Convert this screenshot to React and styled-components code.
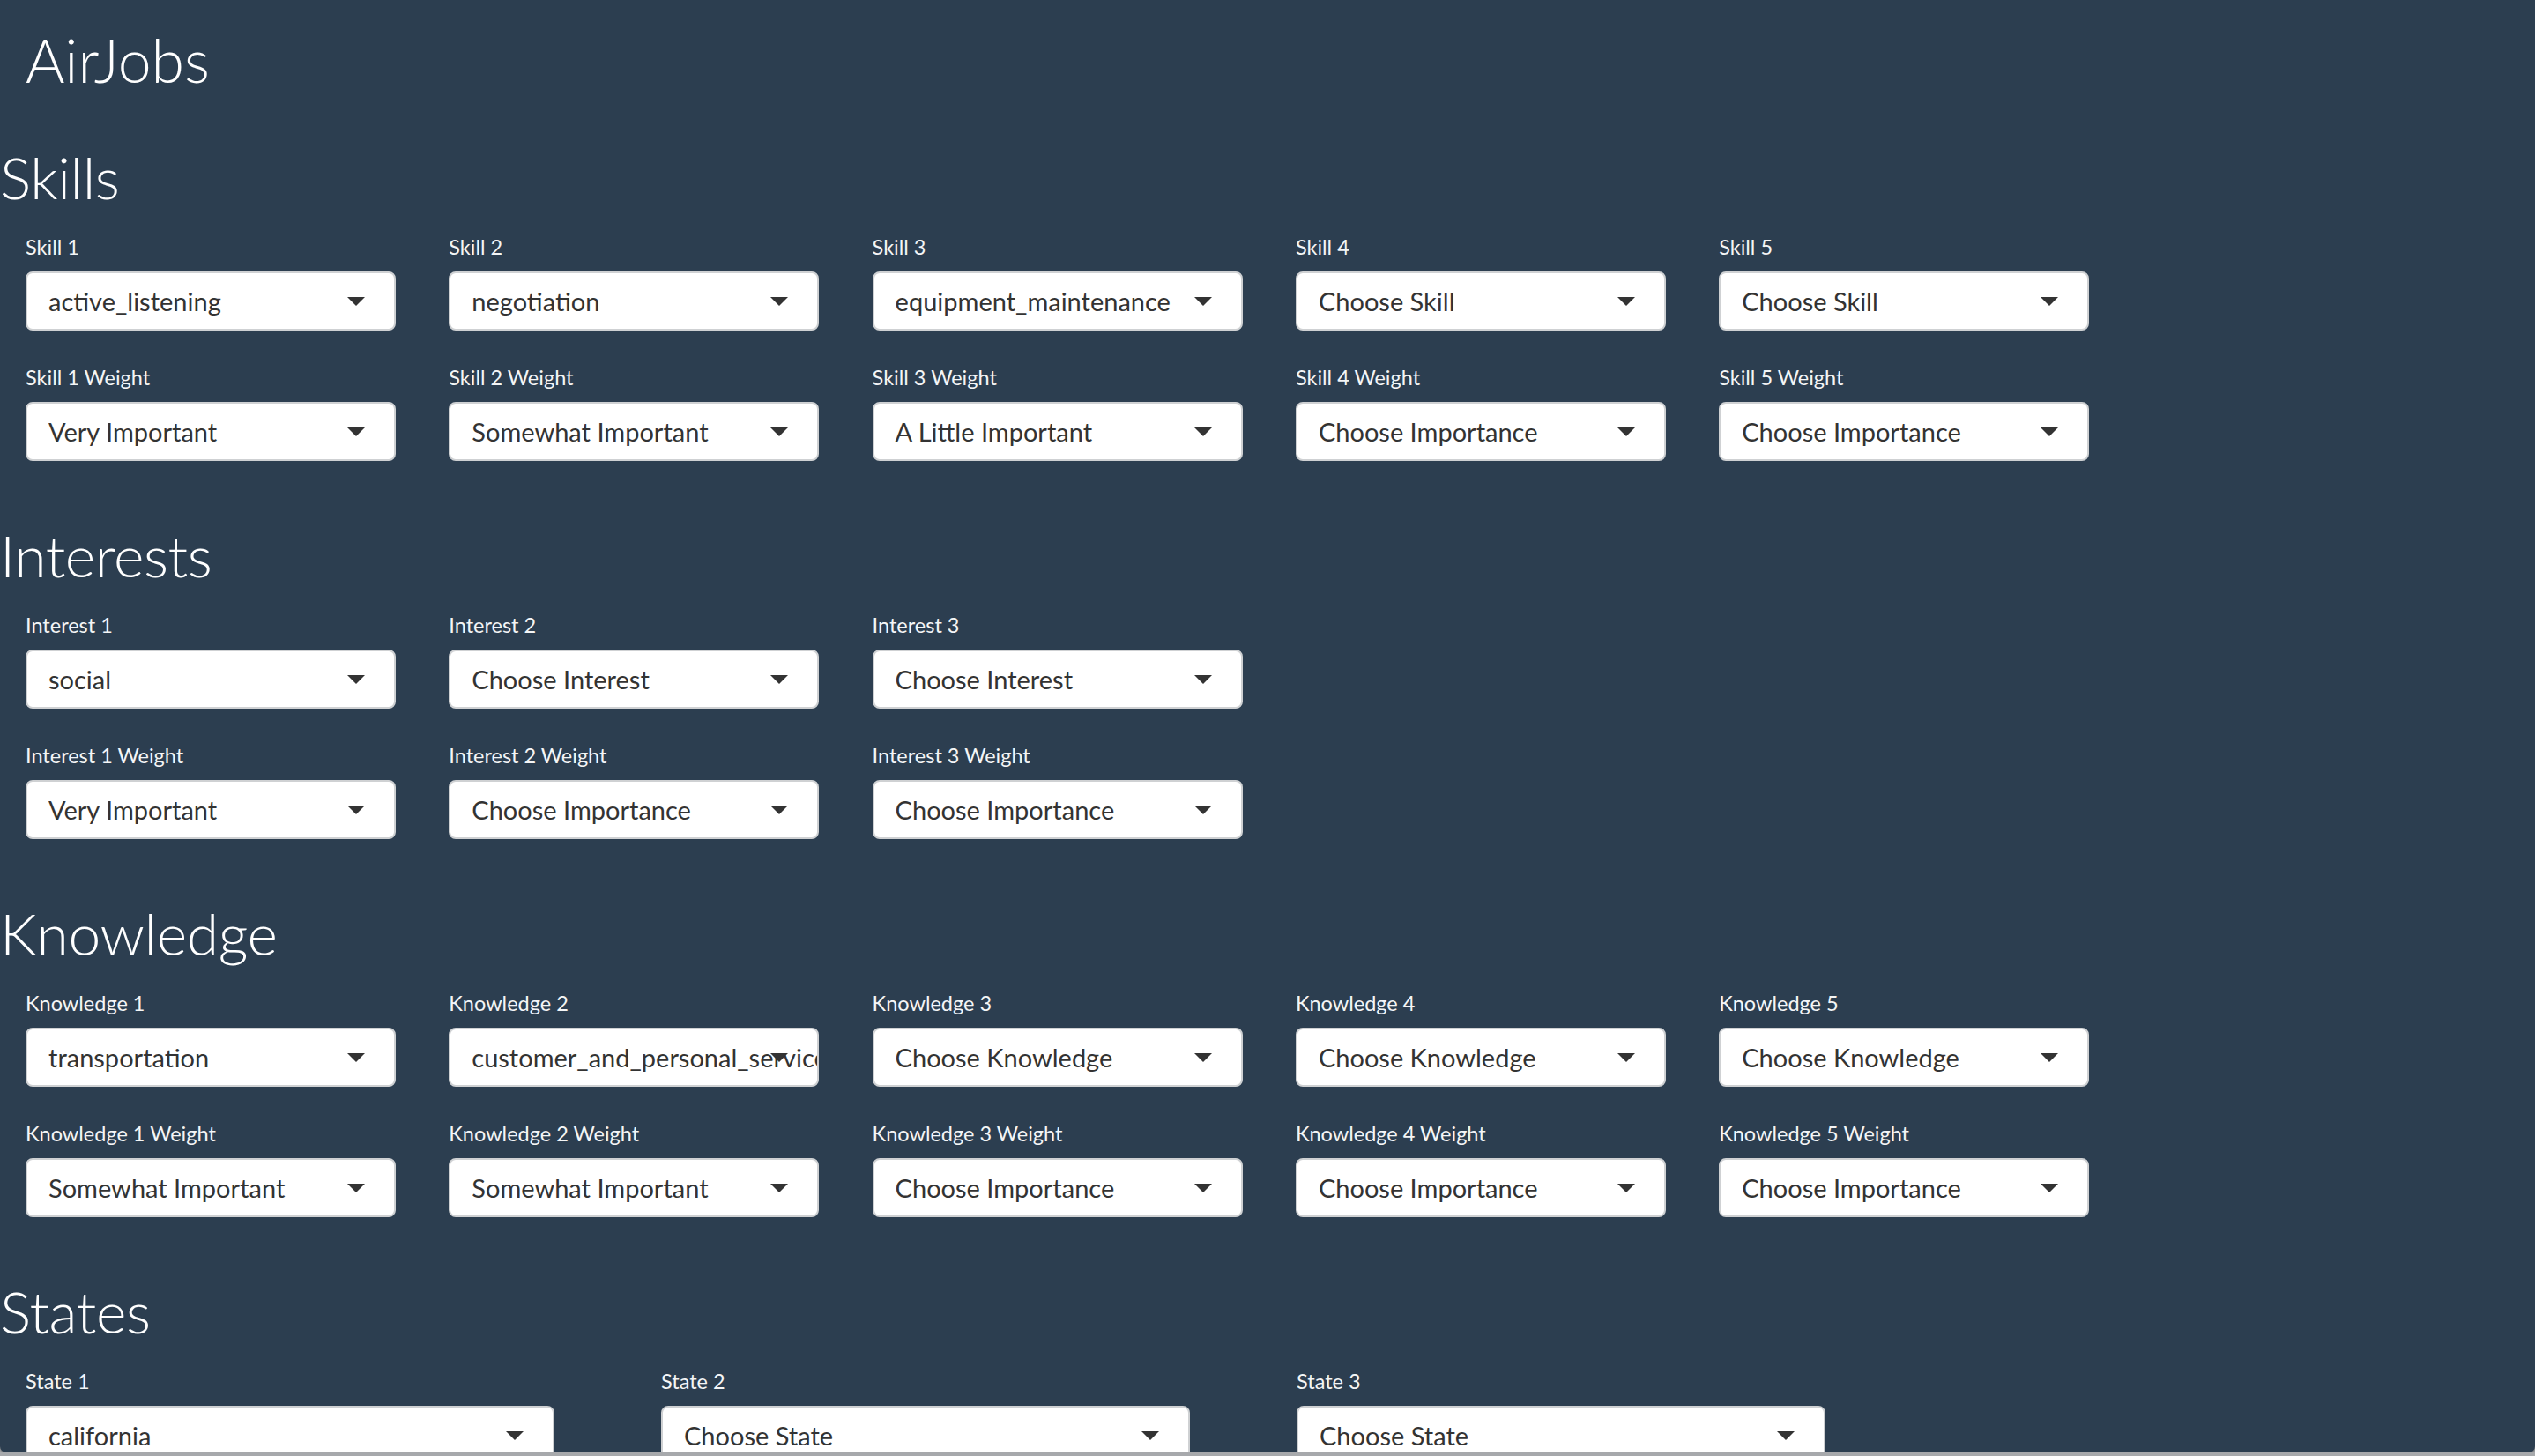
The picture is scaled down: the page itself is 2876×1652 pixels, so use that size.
import React from "react";
import styled, { createGlobalStyle } from "styled-components";

const GlobalStyle = createGlobalStyle`
  html, body {
    margin: 0;
    padding: 0;
    background: #a7a9ac;
  }
  body {
    font-family: "Lato", "Open Sans", sans-serif;
  }
`;

const Page = styled.div`
  background: #2c3e50;
  color: #ffffff;
  height: 1648px;
  overflow: hidden;
  border-radius: 0 0 7px 7px;
  box-shadow: 0 2px 2px rgba(0, 0, 0, 0.25);
`;

const Brand = styled.h1`
  margin: 0;
  padding: 26px 0 0 29px;
  font-size: 68px;
  line-height: 84px;
  font-weight: 300;
  color: #ffffff;
`;

const SectionList = styled.div`
  display: flex;
  flex-direction: column;
  gap: 67px;
  margin-top: 51px;
`;

const Section = styled.section`
  display: flex;
  flex-direction: column;
`;

const Heading = styled.h2`
  margin: 0 0 26px 0;
  font-size: 66px;
  line-height: 80px;
  font-weight: 300;
  letter-spacing: -0.4px;
  color: #ffffff;
`;

const Grid = styled.div`
  display: grid;
  grid-template-columns: repeat(${(p) => p.cols}, ${(p) => p.colWidth}px);
  column-gap: ${(p) => p.gap}px;
  row-gap: 40px;
  padding-left: 29px;
`;

const Field = styled.div`
  display: flex;
  flex-direction: column;
`;

const Label = styled.label`
  font-size: 23.5px;
  line-height: 26px;
  margin-bottom: 15px;
  color: #f4f5f6;
  white-space: nowrap;
`;

const SelectBox = styled.div`
  position: relative;
  box-sizing: border-box;
  height: 67px;
  display: flex;
  align-items: center;
  padding-left: 24px;
  background: #ffffff;
  border: 2px solid #cfd1d3;
  border-radius: 8px;
  overflow: hidden;
  font-size: 29px;
  line-height: 36px;
  color: #333333;
  white-space: nowrap;
`;

const Caret = styled.span`
  position: absolute;
  right: 33px;
  top: 50%;
  margin-top: -5px;
  width: 0;
  height: 0;
  border-left: 10px solid transparent;
  border-right: 10px solid transparent;
  border-top: 10px solid #333333;
`;

const Select = ({ value }) => (
  <SelectBox>
    <span>{value}</span>
    <Caret />
  </SelectBox>
);

const FieldGroup = ({ label, value }) => (
  <Field>
    <Label>{label}</Label>
    <Select value={value} />
  </Field>
);

const sections = [
  {
    title: "Skills",
    name: "Skill",
    cols: 5,
    choose: "Choose Skill",
    values: ["active_listening", "negotiation", "equipment_maintenance", null, null],
    weights: ["Very Important", "Somewhat Important", "A Little Important", null, null],
  },
  {
    title: "Interests",
    name: "Interest",
    cols: 5,
    choose: "Choose Interest",
    values: ["social", null, null],
    weights: ["Very Important", null, null],
  },
  {
    title: "Knowledge",
    name: "Knowledge",
    cols: 5,
    choose: "Choose Knowledge",
    values: ["transportation", "customer_and_personal_service", null, null, null],
    weights: ["Somewhat Important", "Somewhat Important", null, null, null],
  },
];

const states = ["california", null, null];

const App = () => {
  return (
    <>
      <GlobalStyle />
      <Page>
        <Brand>AirJobs</Brand>
        <SectionList>
          {sections.map((s) => (
            <Section key={s.title}>
              <Heading>{s.title}</Heading>
              <Grid cols={s.cols} colWidth={420} gap={60.3}>
                {s.values.map((v, i) => (
                  <FieldGroup
                    key={"v" + i}
                    label={`${s.name} ${i + 1}`}
                    value={v || s.choose}
                  />
                ))}
                {s.values.length < s.cols &&
                  Array.from({ length: s.cols - s.values.length }).map((_, i) => (
                    <div key={"pad" + i} />
                  ))}
                {s.weights.map((w, i) => (
                  <FieldGroup
                    key={"w" + i}
                    label={`${s.name} ${i + 1} Weight`}
                    value={w || "Choose Importance"}
                  />
                ))}
              </Grid>
            </Section>
          ))}
          <Section>
            <Heading>States</Heading>
            <Grid cols={3} colWidth={600} gap={121}>
              {states.map((v, i) => (
                <FieldGroup
                  key={i}
                  label={`State ${i + 1}`}
                  value={v || "Choose State"}
                />
              ))}
            </Grid>
          </Section>
        </SectionList>
      </Page>
    </>
  );
};

export default App;
